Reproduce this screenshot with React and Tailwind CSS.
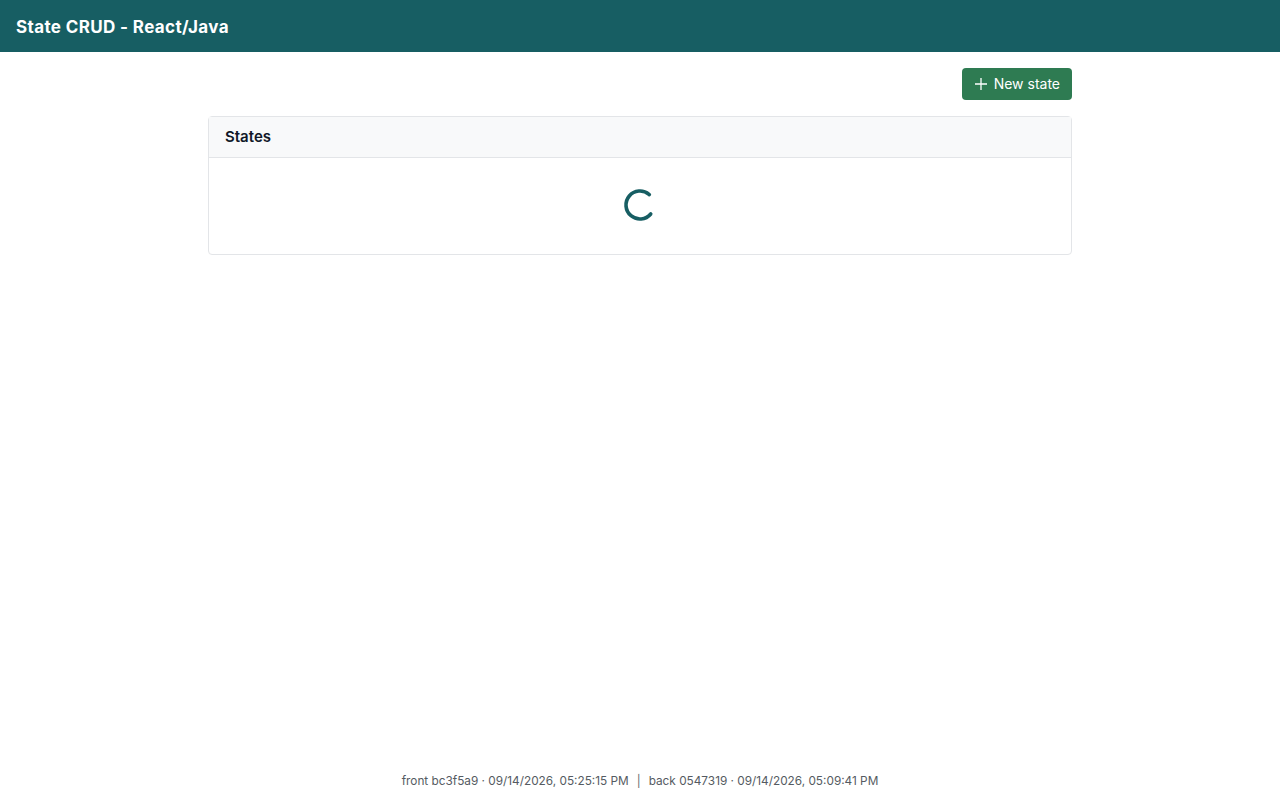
import React from 'react';

const App = () => {
  return (
    <div className="min-h-screen flex flex-col bg-white text-gray-900" style={{ fontFamily: 'Inter, "Noto Sans", sans-serif' }}>
      {/* Header */}
      <header className="h-[52px] bg-[#175e63] flex items-center px-4 pt-[3px]">
        <h1 className="text-white text-[17px] font-bold tracking-[0.022em]">State CRUD - React/Java</h1>
      </header>

      <main className="flex-1">
        <div className="w-[864px] mx-auto pt-4">
          <div className="flex justify-end">
            <button className="h-8 px-3 pb-px rounded bg-[#2e7b52] text-white text-[14px] flex items-center gap-1.5">
              <svg width="14" height="14" viewBox="0 0 14 14" fill="none" stroke="currentColor" strokeWidth="1.3">
                <path d="M7 1v12M1 7h12" />
              </svg>
              New state
            </button>
          </div>

          {/* States card */}
          <div className="mt-4 border border-[#e3e5e8] rounded">
            <div className="h-[41px] bg-[#f8f9fa] border-b border-[#e3e5e8] flex items-center px-4">
              <h2 className="text-[15px] font-semibold">States</h2>
            </div>
            <div className="h-[96px] flex items-center justify-center pb-0.5">
              <svg width="36" height="36" viewBox="0 0 36 36">
                <circle
                  cx="18"
                  cy="18"
                  r="14"
                  fill="none"
                  stroke="#175e63"
                  strokeWidth="3.6"
                  strokeLinecap="round"
                  strokeDasharray="66 88"
                  transform="rotate(40 18 18)"
                />
              </svg>
            </div>
          </div>
        </div>
      </main>

      {/* Footer */}
      <footer className="h-[40px] flex items-center justify-center text-[11.8px] text-[#555b62] gap-2 pt-1">
        <span>front bc3f5a9 · 09/14/2026, 05:25:15 PM</span>
        <span className="text-[#666c72]">|</span>
        <span>back 0547319 · 09/14/2026, 05:09:41 PM</span>
      </footer>
    </div>
  );
};

export default App;
